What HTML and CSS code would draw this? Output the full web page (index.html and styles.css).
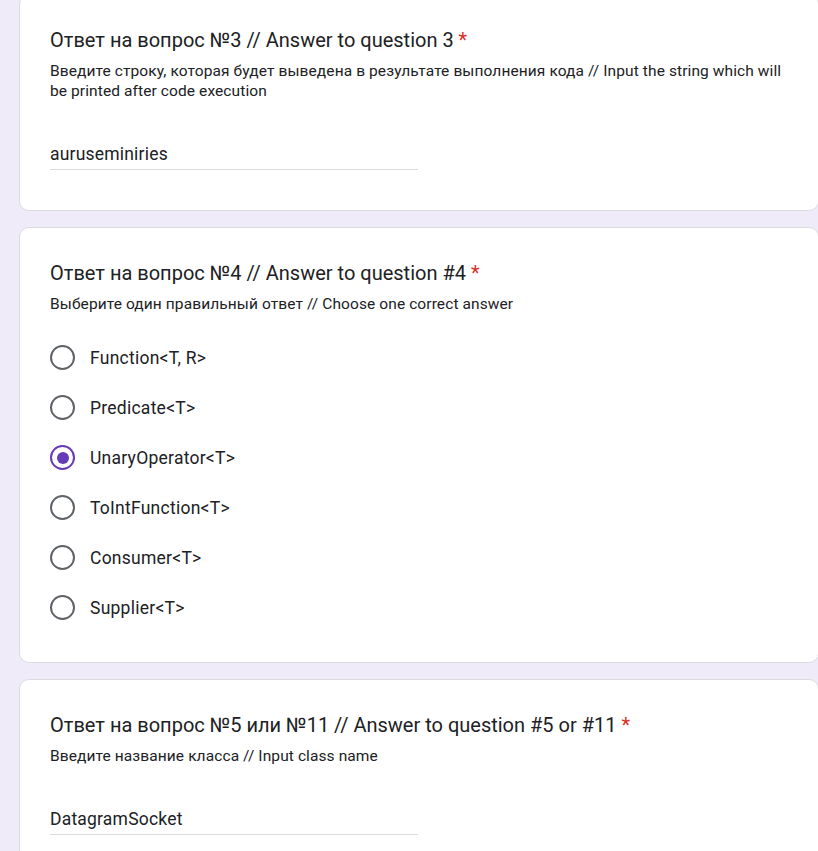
FILE: index.html
```html
<!DOCTYPE html>
<html lang="ru">
<head>
<meta charset="utf-8">
<link rel="stylesheet" href="styles.css">
</head>
<body>
<main class="page">
  <section class="card card-first">
    <h2 class="q-title">Ответ на вопрос №3 // Answer to question 3 <span class="req">*</span></h2>
    <p class="q-desc">Введите строку, которая будет выведена в результате выполнения кода // Input the string which will be printed after code execution</p>
    <div class="text-answer">
      <div class="answer-value">auruseminiries</div>
    </div>
  </section>

  <section class="card card-choice">
    <h2 class="q-title">Ответ на вопрос №4 // Answer to question #4 <span class="req">*</span></h2>
    <p class="q-desc">Выберите один правильный ответ // Choose one correct answer</p>
    <ul class="options">
      <li class="option"><span class="radio"></span><span class="opt-label">Function&lt;T, R&gt;</span></li>
      <li class="option"><span class="radio"></span><span class="opt-label">Predicate&lt;T&gt;</span></li>
      <li class="option"><span class="radio radio-on"></span><span class="opt-label">UnaryOperator&lt;T&gt;</span></li>
      <li class="option"><span class="radio"></span><span class="opt-label">ToIntFunction&lt;T&gt;</span></li>
      <li class="option"><span class="radio"></span><span class="opt-label">Consumer&lt;T&gt;</span></li>
      <li class="option"><span class="radio"></span><span class="opt-label">Supplier&lt;T&gt;</span></li>
    </ul>
  </section>

  <section class="card">
    <h2 class="q-title">Ответ на вопрос №5 или №11 // Answer to question #5 or #11 <span class="req">*</span></h2>
    <p class="q-desc">Введите название класса // Input class name</p>
    <div class="text-answer">
      <div class="answer-value">DatagramSocket</div>
    </div>
  </section>
</main>
</body>
</html>
```

FILE: styles.css
```css
html, body {
  margin: 0;
  padding: 0;
  background: #f0ebf8;
  height: 100%;
  overflow: hidden;
}

.page {
  display: flex;
  flex-direction: column;
  gap: 16px;
  padding-left: 19px;
  font-family: Roboto, "Noto Sans", sans-serif;
  color: #202124;
}

.card {
  background: #ffffff;
  border: 1px solid #dadce0;
  border-radius: 10px;
  padding: 31px 30px 30px 30px;
  box-sizing: border-box;
  width: 800px;
}

.card-first {
  margin-top: -6px;
  padding-bottom: 40px;
}

.card-choice {
  padding-bottom: 42px;
}

.q-title {
  margin: 0;
  font-weight: 400;
  font-size: 20px;
  line-height: 28px;
  letter-spacing: 0;
}

.req {
  color: #d93025;
}

.q-desc {
  margin: 7px 0 0;
  font-size: 15.5px;
  line-height: 20px;
  letter-spacing: 0.1px;
  max-width: 740px;
}

.text-answer {
  margin-top: 40px;
  width: 368px;
  border-bottom: 1px solid #dadce0;
  padding-bottom: 2px;
}

.answer-value {
  font-size: 17.5px;
  line-height: 26px;
  letter-spacing: 0.2px;
}

.options {
  list-style: none;
  margin: 31px 0 0;
  padding: 0;
  display: flex;
  flex-direction: column;
  gap: 25px;
}

.option {
  display: flex;
  align-items: center;
  gap: 15px;
  height: 25px;
}

.radio {
  width: 25px;
  height: 25px;
  box-sizing: border-box;
  border: 2.5px solid #5f6368;
  border-radius: 50%;
  display: flex;
  align-items: center;
  justify-content: center;
  flex: none;
}

.radio-on {
  border-color: #673ab7;
}

.radio-on::after {
  content: "";
  width: 12px;
  height: 12px;
  border-radius: 50%;
  background: #673ab7;
}

.opt-label {
  font-size: 17.5px;
  line-height: 24px;
  letter-spacing: 0.25px;
}
```
